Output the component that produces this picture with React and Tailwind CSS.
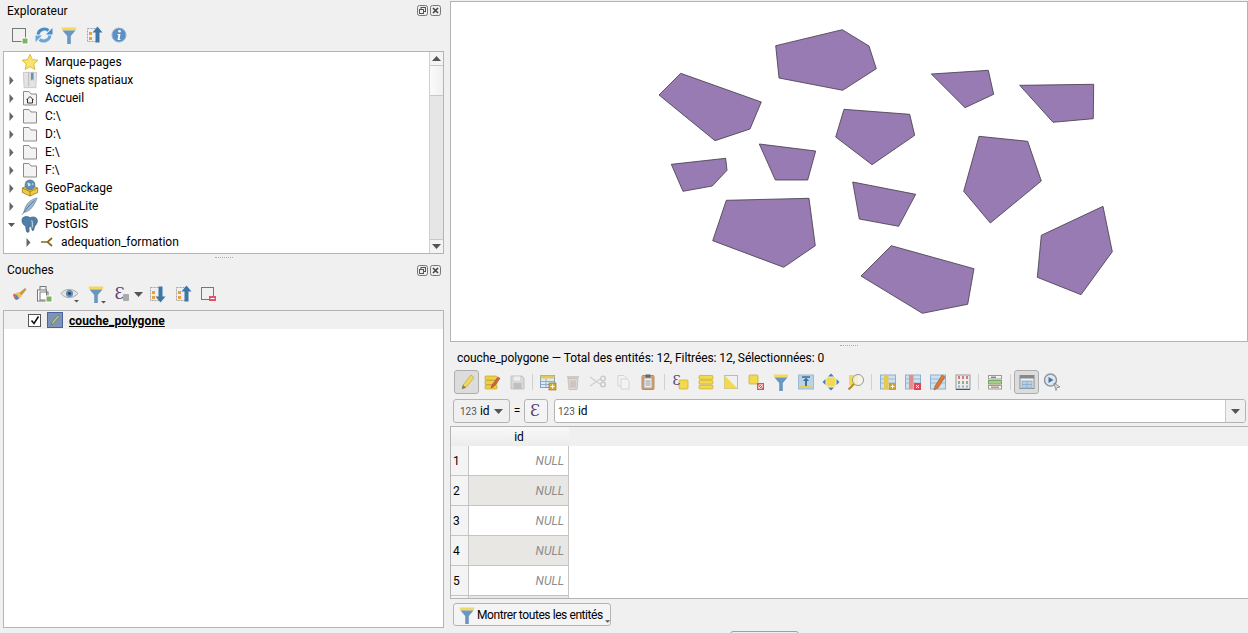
import React from "react";

const polys = [
  "775.7,45.7 842.3,29.7 869,46 876.3,68.7 842.7,90.3 779,78",
  "659,95 680.7,73.3 761.3,102 750,129 715,140.7",
  "671.3,164.3 725.7,158.3 727,170.3 712.3,186 683,191.3",
  "759.3,144 815.7,151 807.7,180 775.3,180",
  "844,109.3 909.7,114.3 914.7,135.3 872,164.7 835.7,137",
  "931.3,74 988.3,70.3 993.7,94.3 965,107.7",
  "1019.7,85.3 1093.7,84.3 1093.3,118.7 1053,122.3",
  "979,136.3 1027.7,141.3 1041.3,181 990.3,223 963.7,191.3",
  "726.3,200.3 809,198.3 815.3,245.7 783.7,267.3 712.7,240.7",
  "852.7,182 915.7,194.3 898.7,226.3 859.3,219",
  "891.3,245.7 974,268.7 967.7,304.3 922.3,313.3 861,276",
  "1103,206.3 1112.3,251.7 1081,294.7 1037.3,277.3 1041.3,235.3",
];

const I = ({ children, s = 20, vb = 20 }) => (
  <svg width={s} height={s} viewBox={`0 0 ${vb} ${vb}`} className="block shrink-0">{children}</svg>
);

const Funnel = ({ caret }) => (
  <I>
    <path d="M2.500 2.500h15l-1 3h-13z" fill="#f2d95c" />
    <path d="M3.500 5.500h13l-4.700 5.500V19H8.200v-8z" fill="#6b96bf" />
    {caret && <path d="M15 17h5l-2.500 2.500z" fill="#555" />}
  </I>
);
const AddLayer = () => (
  <I>
    <rect x="3.500" y="3.500" width="13" height="13" fill="none" stroke="#777" />
    <rect x="13" y="13" width="6" height="6" fill="#7cb35f" stroke="#fff" />
  </I>
);
const Refresh = () => (
  <I>
    <path d="M4 9.500A6.500 6.500 0 0 1 14.500 5.500" fill="none" stroke="#4d8cc4" strokeWidth="3" />
    <path d="M12 9.500h6.500V3z" fill="#4d8cc4" />
    <path d="M16 10.500A6.500 6.500 0 0 1 5.500 14.500" fill="none" stroke="#6ba5d6" strokeWidth="3" />
    <path d="M8 10.500H1.500V17z" fill="#6ba5d6" />
  </I>
);
const TreeArrow = ({ up }) => (
  <I>
    <rect x="3.500" y="3.500" width="10" height="13" fill="none" stroke="#a5a5a5" strokeDasharray="2 1" />
    <rect x="5" y="7" width="3" height="3" fill="#ef9d3c" />
    <rect x="5" y="12" width="3" height="3" fill="#ef9d3c" />
    {up ? <path d="M13.500 1.500l5 6h-3v10h-4v-10h-3z" fill="#3f76a8" /> : <path d="M13.500 18.500l5-6h-3v-10h-4v10h-3z" fill="#3f76a8" />}
  </I>
);
const Info = () => (
  <I>
    <circle cx="10" cy="10" r="7" fill="#5d8fc3" stroke="#8fb2d6" />
    <circle cx="10.500" cy="6.300" r="1.300" fill="#fff" />
    <path d="M8.500 9h3l-1 5h1v1H8.500l1-5h-1z" fill="#fff" />
  </I>
);
const Brush = () => (
  <I>
    <path d="M10 9l6-5 1.500 1.500-5 6z" fill="#c9964a" />
    <path d="M4 10l6-2 3 4-3 3z" fill="#e8c35a" />
    <path d="M4 10l4 1-3 3z" fill="#d9534f" />
    <path d="M5 14l3-3 2 4-3 1z" fill="#5b7fc0" />
  </I>
);
const AddGroup = () => (
  <I>
    <rect x="6" y="2.500" width="6" height="4" fill="none" stroke="#777" />
    <rect x="3.500" y="6" width="9" height="11" fill="#fff" stroke="#777" />
    <rect x="6" y="8" width="8" height="8" fill="none" stroke="#777" />
    <rect x="12" y="12" width="6" height="6" fill="#7cb35f" stroke="#fff" />
  </I>
);
const Eye = () => (
  <I>
    <path d="M1 9.500C5 4 13 4 18 9.500 13 15 5 15 1 9.500z" fill="#e3e3e3" stroke="#aaa" />
    <circle cx="9.500" cy="9.500" r="3.500" fill="#5f8cb8" />
    <circle cx="9.500" cy="9.500" r="1.300" fill="#234" />
    <path d="M14 16h5l-2.500 2.500z" fill="#555" />
  </I>
);
const Eps = ({ c = "#5b3f78", fs = 16, y = 16, x = 3 }) => (
  <text x={x} y={y} fontSize={fs} fill={c} fontFamily="DejaVu Serif, serif">Ɛ</text>
);
const RemoveLayer = () => (
  <I>
    <rect x="3.500" y="3.500" width="12" height="12" fill="none" stroke="#777" />
    <rect x="11" y="12" width="7" height="5" fill="#e8506a" />
    <rect x="12.500" y="14" width="4" height="1" fill="#fff" />
  </I>
);
const Pencil = () => (
  <I>
    <path d="M5 17l1-4L14 3l3 2.500-8 10z" fill="#f0d957" stroke="#b09a3a" strokeWidth=".6" />
    <path d="M5 17l1-4 3 2.500z" fill="#777" />
  </I>
);
const EditTable = () => (
  <I>
    <rect x="3" y="4" width="12" height="4" rx="1" fill="#f0d040" stroke="#b9962e" strokeWidth=".6" />
    <rect x="3" y="8.500" width="12" height="4" rx="1" fill="#f0d040" stroke="#b9962e" strokeWidth=".6" />
    <rect x="3" y="13" width="12" height="4" rx="1" fill="#f0d040" stroke="#b9962e" strokeWidth=".6" />
    <path d="M9 16l1-3 6-8 2 1.500-6 8z" fill="#d9633a" stroke="#8f3f22" strokeWidth=".5" />
  </I>
);
const Save = () => (
  <I>
    <path d="M4 4h11l2 2v11H4z" fill="#d8d8d8" stroke="#c2c2c2" />
    <rect x="7" y="4.500" width="6" height="4" fill="#efefef" />
    <rect x="6.500" y="11" width="8" height="6" fill="#bfbfbf" />
  </I>
);
const NewFeat = () => (
  <I>
    <rect x="2.500" y="3.500" width="14" height="12" fill="#dfe9f2" stroke="#7fa3c4" />
    <rect x="2.500" y="3.500" width="14" height="3" fill="#e4c85a" />
    <path d="M3 9.500h13M3 12.500h13M8 7v8" stroke="#90aec9" />
    <rect x="11" y="11" width="7" height="7" fill="#d8a92f" stroke="#8f6f12" strokeWidth=".6" />
    <path d="M14.500 12.500v4M12.500 14.500h4" stroke="#fff" />
  </I>
);
const Trash = () => (
  <I>
    <path d="M5 6.500h10l-1 11H6z" fill="#dcd6d4" stroke="#c9c2bf" />
    <rect x="4" y="4" width="12" height="2" fill="#cfc8c5" />
    <path d="M8 8.500v7M10 8.500v7M12 8.500v7" stroke="#bdb4b0" />
  </I>
);
const Cut = () => (
  <I>
    <path d="M2 5l10 7M2 14L12 7" stroke="#cfcfcf" strokeWidth="1.300" />
    <circle cx="15" cy="6.500" r="2.300" fill="none" stroke="#c6c6c6" strokeWidth="1.300" />
    <circle cx="15" cy="12.500" r="2.300" fill="none" stroke="#c6c6c6" strokeWidth="1.300" />
  </I>
);
const Copy = () => (
  <I>
    <path d="M5 3.500h6l3 3V14H5z" fill="#f3f3f3" stroke="#d4d4d4" />
    <path d="M8 7h6l2 2v8H8z" fill="#f3f3f3" stroke="#d4d4d4" />
  </I>
);
const Paste = () => (
  <I>
    <rect x="4" y="3.500" width="12" height="14" rx="1" fill="#d8a676" stroke="#b98b5e" />
    <rect x="6" y="6" width="8" height="10" fill="#eee" stroke="#888" strokeWidth=".6" />
    <rect x="7.500" y="2.500" width="5" height="3" fill="#666" />
    <path d="M7.500 9h5M7.500 11h5M7.500 13h5" stroke="#777" strokeWidth=".7" />
  </I>
);
const SelExpr = () => (
  <I>
    <rect x="8" y="8" width="9" height="9" rx="1" fill="#f2d94e" stroke="#c9a92c" strokeWidth=".7" />
    <Eps fs={13} y={13} x={1.500} />
  </I>
);
const SelAll = () => (
  <I>
    <rect x="3" y="3.500" width="14" height="3.800" rx="1" fill="#f2d94e" stroke="#c9a92c" strokeWidth=".7" />
    <rect x="3" y="8.300" width="14" height="3.800" rx="1" fill="#f2d94e" stroke="#c9a92c" strokeWidth=".7" />
    <rect x="3" y="13.100" width="14" height="3.800" rx="1" fill="#f2d94e" stroke="#c9a92c" strokeWidth=".7" />
  </I>
);
const Invert = () => (
  <I>
    <rect x="3.500" y="3.500" width="13" height="13" fill="#f0f0f0" stroke="#bbb" />
    <path d="M3.500 3.500v13h13z" fill="#f2d94e" />
  </I>
);
const Deselect = () => (
  <I>
    <rect x="3" y="3" width="9" height="9" rx="1" fill="#f2d94e" stroke="#c9a92c" strokeWidth=".7" />
    <rect x="11" y="11" width="7" height="7" fill="#e05050" />
    <path d="M12.500 16.500l4-4" stroke="#fff" />
    <circle cx="14.500" cy="14.500" r="2" fill="none" stroke="#fff" strokeWidth=".8" />
  </I>
);
const MoveTop = () => (
  <I>
    <rect x="2.500" y="3" width="15" height="14" fill="#b9d2e6" stroke="#9dbad3" />
    <path d="M6 5h8" stroke="#3f6f9a" strokeWidth="1.500" />
    <path d="M10 5.500l3 3.500h-2v5H9V9H7z" fill="#3f6f9a" />
    <rect x="4" y="14" width="12" height="2" fill="#e5cd57" />
  </I>
);
const PanSel = () => (
  <I>
    <rect x="5.500" y="5.500" width="9" height="9" fill="#f2d94e" />
    <path d="M10 1.500l3 3h-6zM10 18.500l3-3H7zM1.500 10l3-3v6zM18.500 10l-3-3v6z" fill="#4d7fae" />
  </I>
);
const ZoomSel = () => (
  <I>
    <rect x="3" y="3" width="9" height="10" fill="#f2d94e" />
    <circle cx="12" cy="8" r="5.500" fill="#f6f4ea" fillOpacity=".8" stroke="#999" />
    <path d="M8 12l-5.500 5.500" stroke="#b58a2c" strokeWidth="2.200" />
  </I>
);
const Tbl = ({ children }) => (
  <I>
    <rect x="2.500" y="3" width="15" height="14" fill="#cfe0ee" stroke="#8fb0cc" />
    <path d="M3 7h14M3 11h14" stroke="#9dbad3" />
    {children}
  </I>
);
const AddField = () => (
  <Tbl>
    <rect x="6" y="3" width="4.500" height="14" fill="#e7c94d" />
    <rect x="11" y="11" width="7" height="7" fill="#c9a227" />
    <path d="M14.500 12.500v4M12.500 14.500h4" stroke="#fff" />
  </Tbl>
);
const DelField = () => (
  <Tbl>
    <rect x="6" y="3" width="4.500" height="14" fill="#e38d8d" />
    <rect x="11" y="11" width="7" height="7" fill="#d9455a" />
    <path d="M13 13l3 3M16 13l-3 3" stroke="#fff" />
  </Tbl>
);
const EditField = () => (
  <Tbl>
    <path d="M6 18l1-4 7-11 3 2-7 11z" fill="#d9793a" stroke="#8f4a1f" strokeWidth=".5" />
  </Tbl>
);
const Calc = () => (
  <I>
    <rect x="3" y="3" width="14" height="14" fill="#ececec" stroke="#999" />
    <path d="M6 4v3M10 4v3M14 4v3" stroke="#c0504d" strokeWidth="1.400" />
    <path d="M6 9v3M10 9v3M14 9v3" stroke="#6f8f6f" strokeWidth="1.400" />
    <path d="M6 13.500v2M10 13.500v2M14 13.500v2" stroke="#6b96bf" strokeWidth="1.400" />
    <path d="M3 17.500h14" stroke="#555" />
  </I>
);
const Cond = () => (
  <I>
    <rect x="3.500" y="3.500" width="13" height="3.500" fill="#f4f4f4" stroke="#999" />
    <rect x="3.500" y="8.500" width="13" height="3.500" fill="#a6d08e" stroke="#7aa863" />
    <rect x="3.500" y="13.500" width="13" height="3.500" fill="#f4f4f4" stroke="#999" />
    <path d="M6 15.200h8" stroke="#d9534f" />
    <path d="M6 5.200h5" stroke="#555" />
  </I>
);
const Dock = () => (
  <I>
    <rect x="3" y="3.500" width="14" height="13" fill="#f3f3f3" stroke="#888" />
    <rect x="3" y="3.500" width="14" height="3" fill="#888" />
    <rect x="5" y="9" width="10" height="7" fill="#b4cfe6" stroke="#8fb0cc" />
    <path d="M10 9v7M5 12.500h10" stroke="#8fb0cc" />
  </I>
);
const Actions = () => (
  <I>
    <circle cx="8.500" cy="8" r="6" fill="#dfe7ee" stroke="#8b97a3" strokeWidth="1.500" />
    <path d="M6.500 5l5 3-5 3z" fill="#3f76a8" />
    <path d="M12 11l6 4-3 .5-1 3z" fill="#ddd" stroke="#666" strokeWidth=".6" />
  </I>
);

const Star = () => (
  <I s={18} vb={20}>
    <path d="M10 1.500l2.600 5.800 6.300.7-4.700 4.200 1.300 6.200L10 15.300l-5.500 3.100 1.300-6.200L1.100 8l6.300-.7z" fill="#fbe36a" stroke="#d8b93c" />
  </I>
);
const Bookmark = () => (
  <I s={18} vb={20}>
    <path d="M2.500 1.500h15l-1 17h-13z" fill="#e3e3e3" stroke="#c6c6c6" />
    <path d="M8.500 2v15" stroke="#b5b5b5" />
    <path d="M11 2h3v9l-1.500-2-1.500 2z" fill="#6f8fb3" />
  </I>
);
const Folder = ({ home }) => (
  <I s={18} vb={18}>
    <path d="M2.500 2.500h5.500l2 2.500h5.500v11h-13z" fill="#f4f3f1" stroke="#8b8b8b" />
    {home && <path d="M5.500 11L9 7.500l3.500 3.500M6.500 10v4h5v-4" fill="none" stroke="#333" />}
  </I>
);
const Geo = () => (
  <I s={18} vb={20}>
    <path d="M1.500 10l8.500-4 8.500 4v5l-8.500 4-8.500-4z" fill="#f1c93e" stroke="#7a6220" strokeWidth=".7" />
    <path d="M10 14v5M1.500 10l8.500 4 8.500-4" fill="none" stroke="#7a6220" strokeWidth=".7" />
    <circle cx="10" cy="6.500" r="5.500" fill="#5f8fb5" stroke="#3f5f7c" strokeWidth=".6" />
    <path d="M7 4l3 1 1 2-3 1zM12 4l2 2-1 1z" fill="#dfe7ee" />
  </I>
);
const Feather = () => (
  <I s={18} vb={20}>
    <path d="M18 1C11 2 5 8 4 14l-1 3c5 0 11-5 15-16z" fill="#9db7cd" stroke="#587a97" strokeWidth=".6" />
    <path d="M1.500 19.500C5 14 10 8 15 4" fill="none" stroke="#3f5f7c" strokeWidth=".8" />
  </I>
);
const Elephant = () => (
  <I s={18} vb={20}>
    <path d="M2 3c3-2 6-1.500 8 0 3-1.500 7-1 8 2 .8 3-1 6-2.500 7l-1 3c-.3 3-2 3-2.500 1l-.2-3c-1 .3-2 .2-3 0l.2 5c-.4 2-3 1.700-3.300-1-.2-2-.2-4-1-5C1.500 10.500 0 6 2 3z" fill="#4f7ea8" stroke="#2f5575" strokeWidth=".7" />
    <path d="M12 6c1 3 .5 6 .5 8" fill="none" stroke="#fff" strokeWidth=".9" />
  </I>
);
const Conn = () => (
  <I s={14} vb={14}>
    <path d="M1 7h7M12 3L7.500 7l4.500 4" fill="none" stroke="#8a6420" strokeWidth="1.700" />
  </I>
);
const Tri = ({ down }) => (
  <svg width="7" height="9" viewBox="0 0 7 9" className="block shrink-0">
    {down ? <path d="M0 3h7L3.500 7z" fill="#555" /> : <path d="M1.500 0l4 4.500-4 4.500z" fill="#666" />}
  </svg>
);
const Caret = ({ c = "#555" }) => (
  <svg width="9" height="5" viewBox="0 0 9 5" className="block shrink-0"><path d="M0 0h9L4.500 5z" fill={c} /></svg>
);
const FloatBtn = () => (
  <svg width="11" height="11" viewBox="0 0 11 11" className="block">
    <rect x=".5" y=".5" width="10" height="10" rx="2" fill="#eee" stroke="#777" />
    <rect x="4" y="2.500" width="4.500" height="4" fill="none" stroke="#555" />
    <rect x="2.500" y="4.500" width="4" height="4" fill="#eee" stroke="#555" />
  </svg>
);
const CloseBtn = () => (
  <svg width="11" height="11" viewBox="0 0 11 11" className="block">
    <rect x=".5" y=".5" width="10" height="10" rx="2" fill="#eee" stroke="#777" />
    <path d="M3 3l5 5M8 3L3 8" stroke="#444" strokeWidth="1.600" />
  </svg>
);

const Title = ({ children, h }) => (
  <div className={`flex items-center justify-between pl-[4px] pr-[2px] ${h}`}>
    <span>{children}</span>
    <div className="flex gap-[2px] pr-[1px]"><FloatBtn /><CloseBtn /></div>
  </div>
);
const Slot = ({ children, w = "w-[25px]" }) => (
  <div className={`flex items-center justify-center h-[24px] shrink-0 ${w}`}>{children}</div>
);
const Sep = ({ w }) => (
  <div className={`flex justify-center shrink-0 ${w}`}><div className="w-px h-[16px] bg-[#d0d0d0]" /></div>
);
const Active = ({ children }) => (
  <div className="flex items-center justify-center w-[25px] h-[24px] shrink-0 rounded-[3px] border border-[#adadad] bg-[#dcdcdc]">{children}</div>
);

const Row = ({ label, icon, down, tri = true, sub }) => (
  <div className={`flex items-center h-[18px] ${sub ? "pl-[21px]" : "pl-[4px]"}`}>
    <div className="w-[7px] flex justify-center">{tri && <Tri down={down} />}</div>
    <div className={`flex justify-center shrink-0 ${sub ? "w-[29px]" : "w-[30px]"}`}>{icon}</div>
    <span>{label}</span>
  </div>
);

const Badge = () => <span className="text-[10px] text-[#555] mr-[3px]">123</span>;

export default function App() {
  return (
    <div className="relative flex w-[1248px] h-[633px] overflow-hidden bg-[#f0f0f0] text-black text-[12px] font-['Roboto',sans-serif]">
      <div className="flex flex-col w-[450px] shrink-0 pl-[3px] pr-[6px]">
        <Title h="h-[21px]">Explorateur</Title>
        <div className="flex items-center h-[30px] pl-[3px] pb-[2px]">
          <Slot><AddLayer /></Slot><Slot><Refresh /></Slot><Slot><Funnel /></Slot><Slot><TreeArrow up /></Slot><Slot><Info /></Slot>
        </div>
        <div className="flex h-[203px] border border-[#b4b4b4] bg-white overflow-hidden">
          <div className="flex-1 pt-[1px] overflow-hidden">
            <Row label="Marque-pages" icon={<Star />} tri={false} />
            <Row label="Signets spatiaux" icon={<Bookmark />} />
            <Row label="Accueil" icon={<Folder home />} />
            <Row label="C:\" icon={<Folder />} />
            <Row label="D:\" icon={<Folder />} />
            <Row label="E:\" icon={<Folder />} />
            <Row label="F:\" icon={<Folder />} />
            <Row label="GeoPackage" icon={<Geo />} />
            <Row label="SpatiaLite" icon={<Feather />} />
            <Row label="PostGIS" icon={<Elephant />} down />
            <Row label="adequation_formation" icon={<Conn />} sub />
          </div>
          <div className="flex flex-col w-[14px] shrink-0 border-l border-[#d0d0d0] bg-[#e6e6e6]">
            <div className="flex items-center justify-center h-[14px] bg-[#f4f4f4] border-b border-[#c8c8c8]">
              <svg width="9" height="5" viewBox="0 0 9 5"><path d="M0 5h9L4.500 0z" fill="#555" /></svg>
            </div>
            <div className="h-[30px] bg-gradient-to-r from-[#fafafa] to-[#f0f0f0] border-b border-[#c8c8c8]" />
            <div className="flex-1" />
            <div className="flex items-center justify-center h-[14px] bg-[#f4f4f4] border-t border-[#c8c8c8]"><Caret /></div>
          </div>
        </div>
        <div className="flex items-center justify-center h-[6px]">
          <div className="w-[18px] border-t border-dotted border-[#aaa]" />
        </div>
        <Title h="h-[20px]">Couches</Title>
        <div className="flex items-center h-[30px] pl-[3px] pb-[2px]">
          <Slot><Brush /></Slot><Slot w="w-[26px]"><AddGroup /></Slot><Slot w="w-[26px]"><Eye /></Slot><Slot><Funnel caret /></Slot>
          <Slot w="w-[25px]">
            <I><Eps fs={16} y={15} x={3.500} /><rect x="12" y="10" width="6" height="7" rx="1" fill="#aaa" /></I>
          </Slot>
          <Slot w="w-[11px]"><Caret /></Slot>
          <Slot w="w-[26px]"><TreeArrow /></Slot><Slot><TreeArrow up /></Slot><Slot><RemoveLayer /></Slot>
        </div>
        <div className="h-[318px] border border-[#b4b4b4] bg-white">
          <div className="flex items-center h-[18px] bg-[#f0f0f0] pl-[24px]">
            <div className="flex items-center justify-center w-[13px] h-[13px] border border-[#555] bg-white">
              <svg width="10" height="10" viewBox="0 0 10 10"><path d="M1.500 5.500l2.500 3 4.500-7" fill="none" stroke="#111" strokeWidth="1.600" /></svg>
            </div>
            <div className="ml-[6px] w-[16px] h-[16px] bg-[#7f93b8] border border-[#4a63a0] flex items-center justify-center">
              <svg width="12" height="12" viewBox="0 0 12 12"><path d="M2 11l1-3 6-7 1.500 1.500-6 7z" fill="#b7c98e" stroke="#5f7a4a" strokeWidth=".7" /></svg>
            </div>
            <span className="ml-[6px] font-bold underline tracking-[0.12px] pt-[1px]">couche_polygone</span>
          </div>
        </div>
      </div>

      <div className="flex flex-col flex-1 min-w-0">
        <div className="h-[341px] mt-px border border-[#b4b4b4] bg-white">
          <svg width="796" height="339" viewBox="451 2 796 339" className="block">
            {polys.map((p) => (
              <polygon key={p} points={p} fill="#987bb3" stroke="#3f3a45" strokeWidth=".8" />
            ))}
          </svg>
        </div>
        <div className="flex items-center justify-center h-[6px]">
          <div className="w-[18px] border-t border-dotted border-[#aaa]" />
        </div>
        <div className="flex items-center h-[19px] pl-[7px] tracking-[-0.08px]">couche_polygone — Total des entités: 12, Filtrées: 12, Sélectionnées: 0</div>
        <div className="flex items-center h-[31px] pl-[4px] pb-[1px]">
          <Active><Pencil /></Active><Slot><EditTable /></Slot><Slot><Save /></Slot>
          <Sep w="w-[6px]" />
          <Slot><NewFeat /></Slot><Slot><Trash /></Slot><Slot><Cut /></Slot><Slot><Copy /></Slot><Slot><Paste /></Slot>
          <Sep w="w-[8px]" />
          <Slot><SelExpr /></Slot><Slot><SelAll /></Slot><Slot><Invert /></Slot><Slot><Deselect /></Slot><Slot><Funnel /></Slot><Slot><MoveTop /></Slot><Slot><PanSel /></Slot><Slot><ZoomSel /></Slot>
          <Sep w="w-[7px]" />
          <Slot><AddField /></Slot><Slot><DelField /></Slot><Slot><EditField /></Slot><Slot><Calc /></Slot>
          <Sep w="w-[7px]" />
          <Slot><Cond /></Slot>
          <Sep w="w-[7px]" />
          <Active><Dock /></Active><Slot><Actions /></Slot>
        </div>
        <div className="flex items-center h-[24px] mt-[1px] pl-[3px] pr-[2px]">
          <div className="flex items-center justify-between w-[57px] h-[24px] pl-[6px] pr-[6px] rounded-[3px] border border-[#b4b4b4] bg-[#f0f0f0]">
            <span className="flex items-baseline"><Badge />id</span><Caret />
          </div>
          <span className="w-[14px] text-center">=</span>
          <div className="flex items-center justify-center w-[24px] h-[24px] rounded-[3px] border border-[#b4b4b4] bg-[#f4f4f4]">
            <I><Eps fs={16} y={15} x={4} /></I>
          </div>
          <div className="flex items-center flex-1 h-[24px] ml-[6px] rounded-[3px] border border-[#b4b4b4] bg-white">
            <span className="flex flex-1 items-baseline pl-[3px]"><Badge />id</span>
            <div className="flex items-center justify-center w-[20px] h-full border-l border-[#c8c8c8] bg-[#f0f0f0] rounded-r-[3px]"><Caret /></div>
          </div>
        </div>
        <div className="h-[173px] mt-[3px] border-t border-b border-l border-[#b4b4b4] bg-white overflow-hidden">
          <div className="flex h-[19px]">
            <div className="w-[118px] flex items-center justify-center pl-[18px] pt-[1px] bg-gradient-to-b from-[#f8f8f8] to-[#ececec]">id</div>
            <div className="flex-1 bg-[#f0f0f0]" />
          </div>
          {[1, 2, 3, 4, 5, 6].map((n) => (
            <div key={n} className="flex h-[30px]">
              <div className="flex items-center w-[18px] pl-[2px] pt-[1px] bg-[#f4f4f4] border-r border-b border-[#c4c4c4]">{n < 6 ? n : ""}</div>
              <div className={`flex items-center justify-end w-[100px] pr-[4px] pt-[1px] border-r border-b border-[#c4c4c4] italic text-[#8c8c8c] ${n % 2 === 0 ? "bg-[#e9e7e3]" : "bg-white"}`}>{n < 6 ? "NULL" : ""}</div>
            </div>
          ))}
        </div>
        <div className="flex items-start pt-[4px] pl-[3px] flex-1">
          <div className="flex items-center w-[158px] h-[23px] pl-[3px] rounded-[3px] border border-[#b4b4b4] bg-[#f4f4f4]">
            <Funnel />
            <span className="whitespace-nowrap tracking-[-0.42px]">Montrer toutes les entités</span>
            <svg width="6" height="3" viewBox="0 0 6 3" className="ml-[2px] mt-[13px]"><path d="M0 0h6L3 3z" fill="#555" /></svg>
          </div>
        </div>
      </div>
      <div className="absolute left-[730px] top-[631px] w-[69px] h-[4px] rounded-t-[3px] border border-[#a0a0a0] bg-[#f0f0f0]" />
    </div>
  );
}
